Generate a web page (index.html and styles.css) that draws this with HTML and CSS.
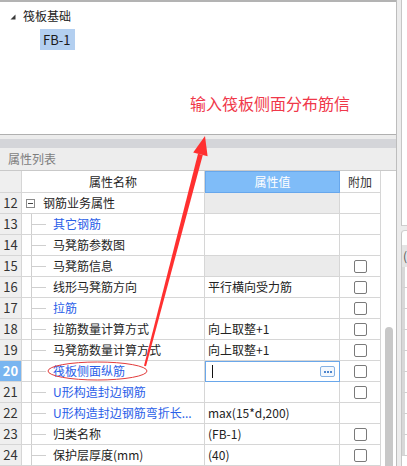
FILE: index.html
```html
<!DOCTYPE html>
<html>
<head>
<meta charset="utf-8">
<link rel="stylesheet" href="styles.css">
</head>
<body>
<div class="app">
  <div class="left">
    <div class="tree-panel">
      <div class="tree-root">
        <svg class="tri" width="6" height="6" viewBox="0 0 6 6"><polygon points="5.5,0.5 5.5,5.5 0.5,5.5" fill="#3a3a3a"/></svg>
        <span>筏板基础</span>
      </div>
      <div class="tree-leaf"><span class="sel">FB-1</span></div>
      <div class="note">输入筏板侧面分布筋信</div>
    </div>
    <div class="splitter"></div>
    <div class="props-title">属性列表</div>
    <div class="grid-wrap">
      <div class="grid">
        <div class="h n"></div>
        <div class="h c">属性名称</div>
        <div class="h v">属性值</div>
        <div class="h a">附加</div>

        <div class="n">12</div>
        <div class="c group"><span class="minus"></span>钢筋业务属性</div>
        <div class="v ro"></div>
        <div class="a"></div>

        <div class="n">13</div>
        <div class="c child blue">其它钢筋</div>
        <div class="v"></div>
        <div class="a"></div>

        <div class="n">14</div>
        <div class="c child">马凳筋参数图</div>
        <div class="v"></div>
        <div class="a"></div>

        <div class="n">15</div>
        <div class="c child">马凳筋信息</div>
        <div class="v ro"></div>
        <div class="a"><span class="cb"></span></div>

        <div class="n">16</div>
        <div class="c child">线形马凳筋方向</div>
        <div class="v">平行横向受力筋</div>
        <div class="a"><span class="cb"></span></div>

        <div class="n">17</div>
        <div class="c child blue">拉筋</div>
        <div class="v"></div>
        <div class="a"><span class="cb"></span></div>

        <div class="n">18</div>
        <div class="c child">拉筋数量计算方式</div>
        <div class="v">向上取整+1</div>
        <div class="a"><span class="cb"></span></div>

        <div class="n">19</div>
        <div class="c child">马凳筋数量计算方式</div>
        <div class="v">向上取整+1</div>
        <div class="a"><span class="cb"></span></div>

        <div class="n cur">20</div>
        <div class="c child blue">筏板侧面纵筋</div>
        <div class="v edit"><span class="caret"></span><span class="dots"><i></i><i></i><i></i></span></div>
        <div class="a"><span class="cb"></span></div>

        <div class="n">21</div>
        <div class="c child blue">U形构造封边钢筋</div>
        <div class="v"></div>
        <div class="a"><span class="cb"></span></div>

        <div class="n">22</div>
        <div class="c child blue">U形构造封边钢筋弯折长...</div>
        <div class="v">max(15*d,200)</div>
        <div class="a"></div>

        <div class="n">23</div>
        <div class="c child">归类名称</div>
        <div class="v">(FB-1)</div>
        <div class="a"><span class="cb"></span></div>

        <div class="n">24</div>
        <div class="c child">保护层厚度(mm)</div>
        <div class="v">(40)</div>
        <div class="a"><span class="cb"></span></div>
      </div>
      <div class="vscroll"><div class="thumb"></div></div>
    </div>
  </div>
  <div class="right">
    <div class="rp-top"></div>
    <div class="rp-bot">
      <div class="rp-space"></div>
      <div class="rp-head">(</div>
      <div class="rp-row"></div>
      <div class="rp-row"></div>
      <div class="rp-row"></div>
      <div class="rp-row"></div>
      <div class="rp-row"></div>
      <div class="rp-row"></div>
      <div class="rp-row"></div>
      <div class="rp-row"></div>
      <div class="rp-row"></div>
    </div>
  </div>
  <svg class="overlay" width="407" height="466" viewBox="0 0 407 466">
    <ellipse cx="97.5" cy="371" rx="49.5" ry="9" fill="none" stroke="#e23c3c" stroke-width="1"/>
    <polygon points="144,365.7 146,366.3 202.8,155 198,153.8" fill="#ff3030"/>
    <polygon points="205,136 193.2,152.4 207.6,156.2" fill="#ff3030"/>
  </svg>
</div>
</body>
</html>
```

FILE: styles.css
```css
html, body {
  margin: 0;
  padding: 0;
}
body {
  width: 407px;
  height: 466px;
  overflow: hidden;
  background: #f0f0f0;
  font-family: "Noto Sans CJK SC", "Noto Sans", sans-serif;
  font-size: 12px;
  color: #222;
}
.app {
  position: relative;
  display: flex;
  width: 407px;
  height: 466px;
}
.left {
  width: 396px;
  border-right: 1px solid #bdbdbd;
  display: flex;
  flex-direction: column;
  background: #ececec;
}
.tree-panel {
  height: 132px;
  border-top: 2px solid #b3b3b3;
  border-bottom: 1px solid #b0b0b0;
  background: #fff;
  display: flex;
  flex-direction: column;
}
.tree-root {
  margin-top: 4px;
  height: 20px;
  display: flex;
  align-items: center;
  padding-left: 10px;
  gap: 7px;
  line-height: 20px;
}
.tri {
  display: block;
  margin-top: 1px;
}
.tree-leaf {
  margin-top: 3px;
  padding-left: 40px;
  height: 21px;
  display: flex;
}
.sel {
  background: #b3cff0;
  width: 35px;
  height: 21px;
  line-height: 21px;
  padding-left: 3px;
  box-sizing: border-box;
  font-size: 13px;
  color: #1a1a1a;
}
.note {
  margin-top: 43px;
  margin-left: 190px;
  font-size: 16px;
  line-height: 20px;
  color: #f0384a;
  white-space: nowrap;
}
.splitter {
  height: 9px;
  margin-top: 4px;
  background: #d4d5d9;
}
.props-title {
  height: 22px;
  line-height: 22px;
  padding-left: 8px;
  color: #7d7d7d;
  background: #ededed;
}
.grid-wrap {
  flex: 1;
  display: flex;
  border-top: 1px solid #c9c9c9;
  background: #fff;
  overflow: hidden;
}
.grid {
  width: 381px;
  display: grid;
  grid-template-columns: 22px 183px 135px 41px;
  grid-template-rows: 22px;
  grid-auto-rows: 21px;
  flex: none;
}
.grid > div {
  box-sizing: border-box;
  border-right: 1px solid #d6d6d6;
  border-bottom: 1px solid #d6d6d6;
  line-height: 20px;
  white-space: nowrap;
  overflow: hidden;
}
.h {
  background: #f1f1f1;
  text-align: center;
  line-height: 21px !important;
  color: #333;
  font-size: 12px;
}
.grid > .h.v {
  background: #7fbcf8;
  border: 1px solid #67a7ec;
  color: #fff;
  line-height: 19px !important;
  padding-left: 0;
}
.n {
  background: #efefef;
  text-align: center;
  font-size: 13px;
  color: #333;
}
.grid > .n.cur {
  background: #79b5f0;
  color: #fff;
  font-weight: bold;
}
.c {
  background: #fff;
  color: #1e1e1e;
}
.group {
  display: flex;
  align-items: center;
  padding-left: 4px;
  gap: 8px;
}
.minus {
  width: 9px;
  height: 9px;
  box-sizing: border-box;
  border: 1px solid #8a8a8a;
  background: linear-gradient(#444, #444) center / 5px 1px no-repeat;
  flex: none;
}
.child {
  padding-left: 31px;
  background:
    linear-gradient(#cfcfcf, #cfcfcf) 9px 0 / 1px 100% no-repeat,
    linear-gradient(#cfcfcf, #cfcfcf) 9px 10px / 15px 1px no-repeat,
    #fff;
}
.blue {
  color: #2a5ee8;
}
.v {
  padding-left: 3px;
  background: #fff;
}
.v.ro {
  background: #ebebeb;
}
.grid > .v.edit {
  border: 1px solid #6aa7ea;
  display: flex;
  align-items: center;
  justify-content: space-between;
  padding: 0 4px 0 6px;
}
.caret {
  width: 1px;
  height: 13px;
  background: #111;
}
.dots {
  width: 15px;
  height: 11px;
  box-sizing: border-box;
  border: 1px solid #86b2e4;
  border-radius: 2px;
  background: #f4f8fd;
  display: flex;
  align-items: center;
  justify-content: center;
  gap: 1px;
}
.dots i {
  width: 2px;
  height: 2px;
  background: #4f86cc;
}
.a {
  background: #fff;
  display: flex;
  align-items: center;
  justify-content: center;
}
.cb {
  width: 13px;
  height: 13px;
  box-sizing: border-box;
  border: 1px solid #7a7a7a;
  border-radius: 2px;
  background: #fff;
}
.vscroll {
  flex: 1;
  padding-top: 156px;
  padding-left: 4px;
  background: #fff;
}
.thumb {
  width: 8px;
  height: 200px;
  background: #c8c8c8;
  border-radius: 4px 4px 0 0;
}
.right {
  width: 10px;
  padding-left: 4px;
  box-sizing: border-box;
  background: #ececec;
  display: flex;
  flex-direction: column;
}
.rp-top {
  height: 225px;
  background: #fff;
  border-left: 1px solid #c6c6c6;
  border-bottom: 1px solid #cfcfcf;
}
.rp-bot {
  margin-top: 4px;
  flex: 1;
  background: #fff;
  border-left: 1px solid #c6c6c6;
  border-top: 1px solid #cfcfcf;
  border-top-left-radius: 4px;
  overflow: hidden;
}
.rp-space {
  height: 14px;
}
.rp-head {
  height: 22px;
  line-height: 22px;
  background: #e4e4e4;
  padding-left: 1px;
  color: #555;
  font-size: 12px;
}
.rp-row {
  height: 21px;
  box-sizing: border-box;
  border-bottom: 1px solid #d0d0d0;
  border-left: 3px solid #d8d8d8;
}
.overlay {
  position: absolute;
  left: 0;
  top: 0;
  pointer-events: none;
}
```
